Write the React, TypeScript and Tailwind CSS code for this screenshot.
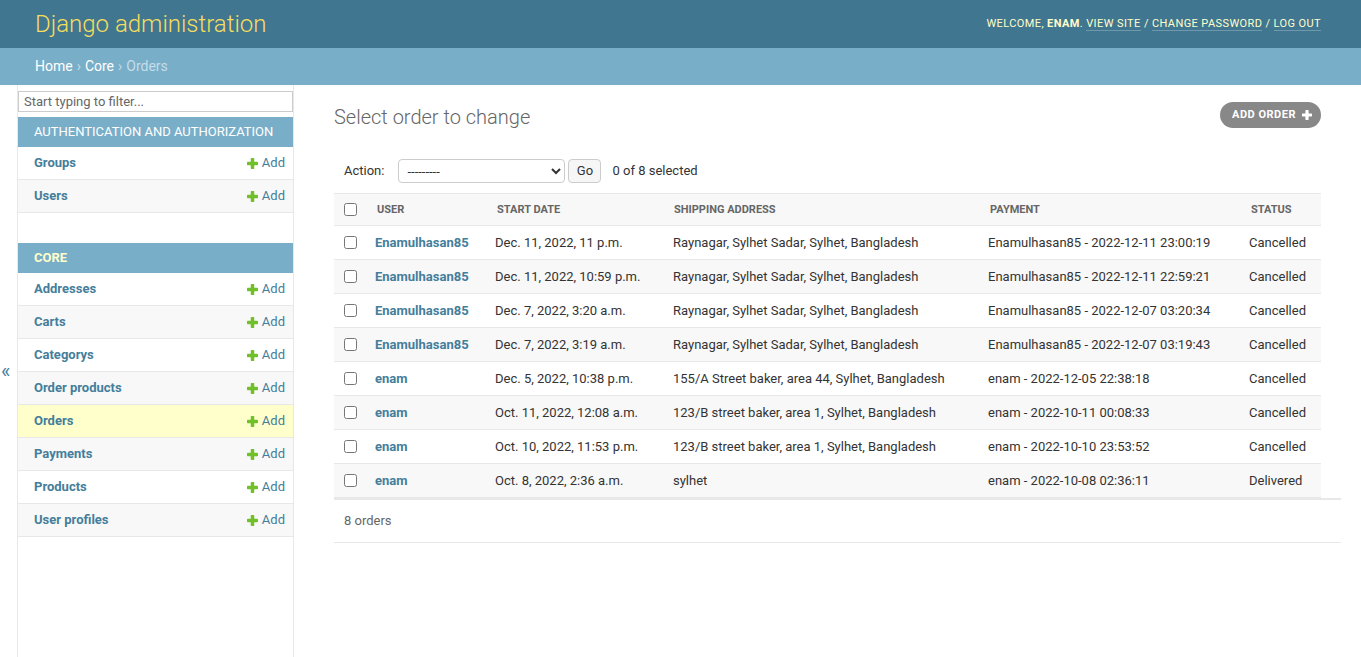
import type { ReactNode } from 'react'

const font = { fontFamily: 'Roboto, "Liberation Sans", sans-serif' }

interface Order {
  user: string
  start: string
  address: string
  payment: string
  status: string
}

const orders: Order[] = [
  { user: 'Enamulhasan85', start: 'Dec. 11, 2022, 11 p.m.', address: 'Raynagar, Sylhet Sadar, Sylhet, Bangladesh', payment: 'Enamulhasan85 - 2022-12-11 23:00:19', status: 'Cancelled' },
  { user: 'Enamulhasan85', start: 'Dec. 11, 2022, 10:59 p.m.', address: 'Raynagar, Sylhet Sadar, Sylhet, Bangladesh', payment: 'Enamulhasan85 - 2022-12-11 22:59:21', status: 'Cancelled' },
  { user: 'Enamulhasan85', start: 'Dec. 7, 2022, 3:20 a.m.', address: 'Raynagar, Sylhet Sadar, Sylhet, Bangladesh', payment: 'Enamulhasan85 - 2022-12-07 03:20:34', status: 'Cancelled' },
  { user: 'Enamulhasan85', start: 'Dec. 7, 2022, 3:19 a.m.', address: 'Raynagar, Sylhet Sadar, Sylhet, Bangladesh', payment: 'Enamulhasan85 - 2022-12-07 03:19:43', status: 'Cancelled' },
  { user: 'enam', start: 'Dec. 5, 2022, 10:38 p.m.', address: '155/A Street baker, area 44, Sylhet, Bangladesh', payment: 'enam - 2022-12-05 22:38:18', status: 'Cancelled' },
  { user: 'enam', start: 'Oct. 11, 2022, 12:08 a.m.', address: '123/B street baker, area 1, Sylhet, Bangladesh', payment: 'enam - 2022-10-11 00:08:33', status: 'Cancelled' },
  { user: 'enam', start: 'Oct. 10, 2022, 11:53 p.m.', address: '123/B street baker, area 1, Sylhet, Bangladesh', payment: 'enam - 2022-10-10 23:53:52', status: 'Cancelled' },
  { user: 'enam', start: 'Oct. 8, 2022, 2:36 a.m.', address: 'sylhet', payment: 'enam - 2022-10-08 02:36:11', status: 'Delivered' },
]

// plus sign used by the "Add" links and the object tool button
function PlusIcon({ className }: { className?: string }) {
  return (
    <svg viewBox="0 0 10 10" className={className} fill="currentColor">
      <rect x="3.4" y="0" width="3.2" height="10" rx="0.7" />
      <rect x="0" y="3.4" width="10" height="3.2" rx="0.7" />
    </svg>
  )
}

function Caption({ children, current }: { children: ReactNode; current?: boolean }) {
  return (
    <div
      className={`h-[30px] flex items-center pl-4 bg-[#79aec8] text-[13px] uppercase ${
        current ? 'text-[#ffc] font-bold' : 'text-white'
      }`}
    >
      {children}
    </div>
  )
}

function ModelRow({ name, bg }: { name: string; bg: string }) {
  return (
    <div className={`h-[33px] flex items-center justify-between pl-4 pr-2 border-b border-[#e8e8e8] ${bg}`}>
      <span className="text-[13px] font-bold text-[#447e9b]">{name}</span>
      <span className="flex items-center gap-[4px] text-[13px] text-[#447e9b]">
        <PlusIcon className="w-[11px] h-[11px] text-[#70bf2b]" />
        Add
      </span>
    </div>
  )
}

function Sidebar() {
  return (
    <div className="w-[276px] shrink-0 border-r border-[#e8e8e8]">
      <input
        placeholder="Start typing to filter..."
        className="mt-[6px] block w-[275px] h-[21px] border border-[#ccc] px-[5px] text-[13px] text-[#333] placeholder:text-[#666] outline-none"
      />
      <div className="mt-[5px] mb-[30px]">
        <Caption>Authentication and Authorization</Caption>
        <ModelRow name="Groups" bg="bg-white" />
        <ModelRow name="Users" bg="bg-[#f8f8f8]" />
      </div>
      <div>
        <Caption current>Core</Caption>
        <ModelRow name="Addresses" bg="bg-white" />
        <ModelRow name="Carts" bg="bg-[#f8f8f8]" />
        <ModelRow name="Categorys" bg="bg-white" />
        <ModelRow name="Order products" bg="bg-[#f8f8f8]" />
        <ModelRow name="Orders" bg="bg-[#ffc]" />
        <ModelRow name="Payments" bg="bg-[#f8f8f8]" />
        <ModelRow name="Products" bg="bg-white" />
        <ModelRow name="User profiles" bg="bg-[#f8f8f8]" />
      </div>
    </div>
  )
}

function ChangeList() {
  return (
    <div className="flex-1 pt-5 pl-10 pr-10">
      {/* title + add button */}
      <div className="flex items-start justify-between mb-5">
        <h1 className="text-[20px] leading-[24px] font-light text-[#666]">Select order to change</h1>
        <button className="-mt-[3px] h-[26px] flex items-center gap-[6px] pl-[12px] pr-[9px] rounded-full bg-[#888] text-white text-[11px] font-bold tracking-[0.5px] uppercase">
          Add order
          <PlusIcon className="w-[10px] h-[10px]" />
        </button>
      </div>

      {/* actions */}
      <div className="flex items-center h-[44px] pl-[10px] text-[13px] text-[#333]">
        <span className="mr-[14px]">Action:</span>
        <select className="w-[167px] h-[24px] border border-[#ccc] rounded-[4px] px-[4px] text-[13px] bg-white">
          <option>---------</option>
        </select>
        <button className="ml-[3px] w-[33px] h-[24px] border border-[#ccc] rounded-[4px] bg-[#f6f6f6] text-[13px]">Go</button>
        <span className="ml-[11px]">0 of 8 selected</span>
      </div>

      {/* results */}
      <div className="-mr-5 border-b-2 border-[#e8e8e8]">
        <table className="w-[987px] table-fixed border-separate border-spacing-0 text-[13px] text-[#333]">
          <thead>
            <tr className="bg-[#f8f8f8]">
              <th className="w-[33px] h-[33px] pl-[10px] border-t border-b border-[#e8e8e8] text-left">
                <input type="checkbox" className="m-0 block w-[13px] h-[13px]" />
              </th>
              <th className="w-[120px] pl-[10px] pt-[1px] border-t border-b border-[#e8e8e8] text-left text-[11px] font-bold uppercase text-[#666]">User</th>
              <th className="w-[178px] pl-[10px] pt-[1px] border-t border-b border-[#e8e8e8] text-left text-[11px] font-bold uppercase text-[#666]">Start date</th>
              <th className="w-[315px] pl-[9px] pt-[1px] border-t border-b border-[#e8e8e8] text-left text-[11px] font-bold uppercase text-[#666]">Shipping address</th>
              <th className="w-[261px] pl-[10px] pt-[1px] border-t border-b border-[#e8e8e8] text-left text-[11px] font-bold uppercase text-[#666]">Payment</th>
              <th className="pl-[10px] pt-[1px] border-t border-b border-[#e8e8e8] text-left text-[11px] font-bold uppercase text-[#666]">Status</th>
            </tr>
          </thead>
          <tbody>
            {orders.map((o, i) => (
              <tr key={i} className={i % 2 === 1 ? 'bg-[#f8f8f8]' : 'bg-white'}>
                <td className="h-[34px] pl-[10px] border-b border-[#e8e8e8]">
                  <input type="checkbox" className="m-0 block w-[13px] h-[13px]" />
                </td>
                <td className="pl-[8px] border-b border-[#e8e8e8] font-bold text-[#447e9b]">{o.user}</td>
                <td className="pl-[8px] border-b border-[#e8e8e8]">{o.start}</td>
                <td className="pl-[8px] border-b border-[#e8e8e8]">{o.address}</td>
                <td className="pl-[8px] border-b border-[#e8e8e8]">{o.payment}</td>
                <td className="pl-[8px] border-b border-[#e8e8e8]">{o.status}</td>
              </tr>
            ))}
          </tbody>
        </table>
      </div>
      <div className="-mr-5 h-[43px] flex items-center pl-[10px] border-b border-[#e8e8e8] text-[13px] text-[#666]">
        8 orders
      </div>
    </div>
  )
}

export default function App() {
  return (
    <div className="min-h-screen flex flex-col bg-white" style={font}>
      {/* header */}
      <div className="h-[48px] shrink-0 flex items-center justify-between pl-[35px] pr-[40px] bg-[#417690]">
        <div className="text-[24px] font-light text-[#f5dd5d]">Django administration</div>
        <div className="text-[11px] tracking-[0.4px] uppercase text-[#ffc]">
          Welcome, <strong className="font-bold">enam</strong>.{' '}
          <span className="border-b border-white/25">View site</span> /{' '}
          <span className="border-b border-white/25">Change password</span> /{' '}
          <span className="border-b border-white/25">Log out</span>
        </div>
      </div>

      {/* breadcrumbs */}
      <div className="h-[37px] shrink-0 flex items-center pl-[35px] bg-[#79aec8] text-[14px] text-[#c4dce8]">
        <span className="text-white">Home</span>
        <span className="mx-[4px] text-[#c4dce8]">›</span>
        <span className="text-white">Core</span>
        <span className="mx-[4px]">›</span>
        <span>Orders</span>
      </div>

      <div className="flex-1 flex">
        <div className="w-[18px] shrink-0 flex items-center pl-[1px] border-r border-[#e8e8e8] text-[20px] text-[#447e9b]">
          «
        </div>
        <Sidebar />
        <ChangeList />
      </div>
    </div>
  )
}
